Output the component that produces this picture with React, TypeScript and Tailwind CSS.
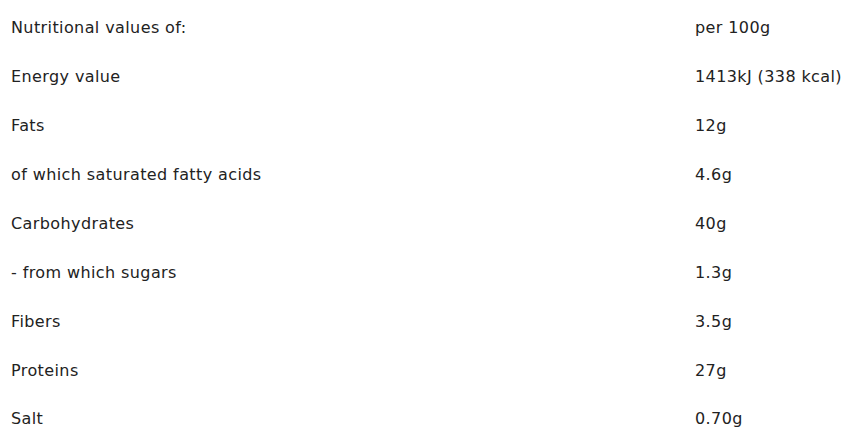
import React from "react";

const rows: [string, string][] = [
  ["Nutritional values of:", "per 100g"],
  ["Energy value", "1413kJ (338 kcal)"],
  ["Fats", "12g"],
  ["of which saturated fatty acids", "4.6g"],
  ["Carbohydrates", "40g"],
  ["- from which sugars", "1.3g"],
  ["Fibers", "3.5g"],
  ["Proteins", "27g"],
  ["Salt", "0.70g"],
];

export default function App() {
  return (
    <div
      className="w-[866px] h-[448px] bg-white text-[#222222] text-[16px] tracking-[0.4px] pt-[4px]"
      style={{ fontFamily: '"DejaVu Sans", Verdana, sans-serif' }}
    >
      {rows.map(([a, b]) => (
        <div key={a} className="grid grid-cols-[695px_1fr] h-[48.875px] items-center">
          <div className="pl-[11px] whitespace-nowrap">{a}</div>
          <div className="whitespace-nowrap">{b}</div>
        </div>
      ))}
    </div>
  );
}
